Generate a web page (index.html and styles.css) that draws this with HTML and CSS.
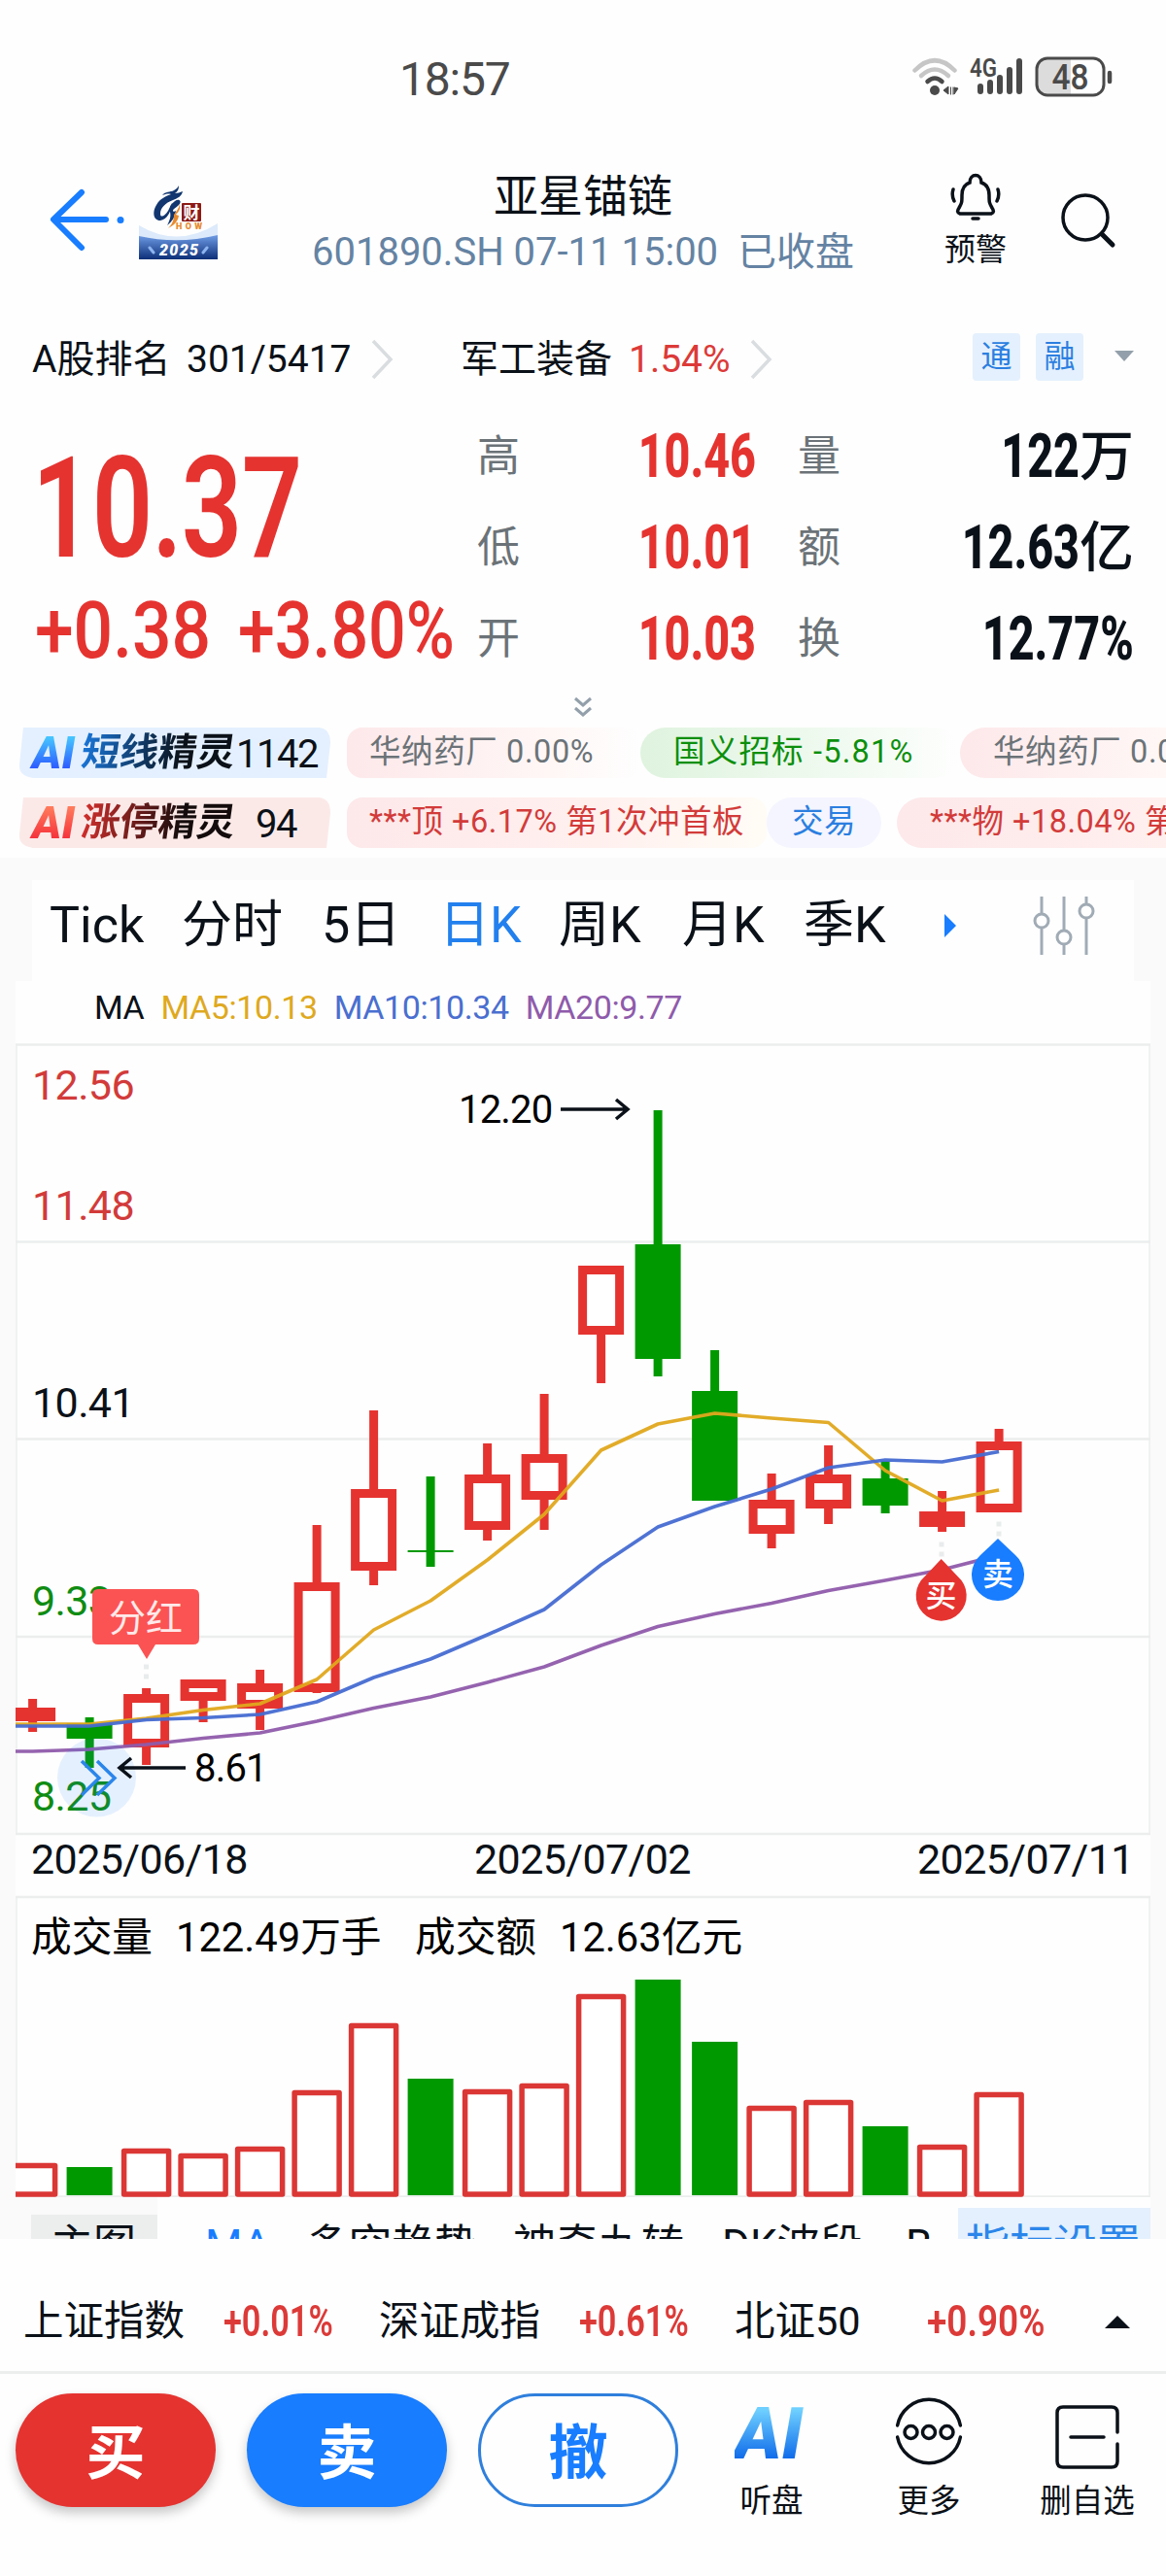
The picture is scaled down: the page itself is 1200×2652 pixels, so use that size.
FILE: index.html
```html
<!DOCTYPE html>
<html lang="zh-CN">
<head>
    <meta charset="utf-8">
    <meta name="viewport" content="width=device-width, initial-scale=1.0">
    <title>亚星锚链 601890.SH</title>
    <link rel="stylesheet" href="styles.css">
</head>
<body>
    <div class="status-bar">
        <div class="clock">18:57</div>
        <svg class="status-icons" width="212" height="44" viewBox="0 0 212 44">
            <g fill="none" stroke-width="4.500" stroke-linecap="round">
                <path d="M3.500 15.500Q24 -5 44.500 15.500" stroke="#c6c6c6"/>
                <path d="M10 21Q24 8 38 21" stroke="#c6c6c6"/>
                <path d="M16.500 27Q24 20 31.500 27" stroke="#4a4a4a"/>
            </g>
            <circle cx="24" cy="36" r="5" fill="#4a4a4a"/>
            <path d="M33 36l5-4v8zM40.500 32.500v8M43 32.500v8M48 34l-4 6v-7z" fill="#4a4a4a" stroke="#4a4a4a" stroke-width="1"/>
            <text x="60" y="22" class="net" textLength="28" lengthAdjust="spacingAndGlyphs">4G</text>
            <g stroke="#4a4a4a" stroke-width="6" stroke-linecap="round">
                <path d="M71 32v5M81 28v9M91 23v14M101 15v22M111 6v31"/>
            </g>
            <path d="M138 4h26v36h-26a9 9 0 0 1-9-9v-18a9 9 0 0 1 9-9z" fill="#dcdcdc"/>
            <rect x="129" y="3" width="69" height="38" rx="11" fill="none" stroke="#4a4a4a" stroke-width="3"/>
            <path d="M204 18v9" stroke="#4a4a4a" stroke-width="4.500" stroke-linecap="round"/>
            <text x="144.500" y="35" class="battery" textLength="38" lengthAdjust="spacingAndGlyphs">48</text>
        </svg>
    </div>

    <div class="header">
        <svg class="back" width="80" height="66" viewBox="0 0 80 66">
            <path d="M34 4L5 32l29 29M6 32h53" fill="none" stroke="#187dff" stroke-width="6" stroke-linecap="round" stroke-linejoin="round"/>
            <circle cx="74" cy="32.500" r="3.500" fill="#187dff"/>
        </svg>
        <svg class="logo" width="81" height="77" viewBox="0 0 81 77">
            <defs>
                <linearGradient id="logo-bg" x1="0" y1="0" x2="0" y2="1">
                    <stop offset="0" stop-color="#6f9ce6"/>
                    <stop offset="1" stop-color="#0c2f78"/>
                </linearGradient>
            </defs>
            <path d="M0 42Q40 66 81 40V77H0z" fill="#dceafb"/>
            <path d="M0 53Q40 62 81 52V77H0z" fill="url(#logo-bg)"/>
            <path d="M41 1c0 4-1 6-4 8 3 0 5-1 8-2-1 5-5 7-10 9-8 3-13 8-13 14 0 5 5 2 8-3l4-8c-1 9-5 17-12 18-8 0-8-10-4-16 4-7 10-9 15-11-3-1-6 0-9 1 3-4 8-3 12-5 2-1 4-3 5-5z" fill="#12366f"/>
            <path d="M37 17c4-3 8 0 4 4-3 3-6 4-6 6 0 1 2 1 3 0-1 7-4 11-9 15 3-6 4-9 3-14-1-5 1-8 5-11z" fill="#12366f"/>
            <path d="M42 20c1 5-1 8-4 11l3 1c-1 6-5 10-11 13 4-4 6-8 6-14 2-3 5-6 6-11z" fill="#e88a2e"/>
            <rect x="44" y="19" width="20" height="19" rx="1" fill="#8c1a16"/>
            <text x="45.500" y="35" class="logo-cai">财</text>
            <text x="38" y="46" class="logo-how" textLength="27">HOW</text>
            <text x="21" y="73" class="logo-year" textLength="40">2025</text>
            <path d="M11 65l4 5M70 65l-4 5" stroke="#8cb4f0" stroke-width="3" stroke-linecap="round"/>
        </svg>
        <div class="title">
            <div class="name">亚星锚链</div>
            <div class="code">601890.SH 07-11 15:00 <span>已收盘</span></div>
        </div>
        <div class="alert">
            <svg width="54" height="54" viewBox="0 0 54 54" fill="none" stroke="#0b1118" stroke-width="3.500" stroke-linecap="round">
                <path d="M11 44c-3-1-3-3-1-6 3-5 3-6 3-13 0-7 2-11 8-13 0-10 12-10 12 0 6 2 8 6 8 13 0 7 0 8 3 13 2 3 2 5-1 6z"/>
                <path d="M4 19q-2 6 1 12M50 19q2 6-1 12M24 49h6"/>
            </svg>
            <div>预警</div>
        </div>
        <svg class="search" width="60" height="60" viewBox="0 0 60 60" fill="none" stroke="#0b1118">
            <circle cx="25" cy="26" r="23" stroke-width="3.500"/>
            <path d="M42 43l11 11" stroke-width="5" stroke-linecap="round"/>
        </svg>
    </div>

    <div class="rank-row">
        <div class="rank-name">A股排名</div>
        <div class="rank-num">301/5417</div>
        <svg class="chev" width="24" height="42" viewBox="0 0 24 42"><path d="M2 2l18 19L2 40" fill="none" stroke="#d9dde0" stroke-width="3.500"/></svg>
        <div class="sector">军工装备</div>
        <div class="sector-chg">1.54%</div>
        <svg class="chev" width="24" height="42" viewBox="0 0 24 42"><path d="M2 2l18 19L2 40" fill="none" stroke="#d9dde0" stroke-width="3.500"/></svg>
        <div class="tag">通</div>
        <div class="tag">融</div>
        <svg class="drop" width="20" height="11" viewBox="0 0 20 11"><path d="M0 0h20L10 11z" fill="#93a0ab"/></svg>
    </div>

    <div class="quote">
        <div class="price-box">
            <div class="price">10.37</div>
            <div class="change"><span class="diff">+0.38</span><span class="pct">+3.80%</span></div>
        </div>
        <div class="stats">
            <div class="label">高</div><div class="val red"><b>10.46</b></div><div class="label">量</div><div class="val"><b>122</b><i>万</i></div>
            <div class="label">低</div><div class="val red"><b>10.01</b></div><div class="label">额</div><div class="val"><b>12.63</b><i>亿</i></div>
            <div class="label">开</div><div class="val red"><b>10.03</b></div><div class="label">换</div><div class="val"><b>12.77%</b></div>
        </div>
    </div>
    <div class="expand">
        <svg width="20" height="24" viewBox="0 0 20 24" fill="none" stroke="#93a0ab" stroke-width="3"><path d="M2 2l8 7 8-7M2 12l8 7 8-7"/></svg>
    </div>

    <div class="ai-row">
        <div class="ai-badge blue">
            <svg class="ai-shape" width="320" height="52" viewBox="0 0 320 52"><path d="M4 0H308Q320 1 320 16L316 52H14Q-1 50 0 38z" fill="#e4f0ff"/></svg>
            <span class="ai">AI</span><span class="ai-name">短线精灵</span><span class="count">1142</span>
        </div>
        <div class="ticker">
            <div class="pill pink w1 first">华纳药厂 0.00%</div>
            <div class="pill green w2">国义招标 -5.81%</div>
            <div class="pill pink w3">华纳药厂 0.00%</div>
        </div>
    </div>
    <div class="ai-row second">
        <div class="ai-badge rose">
            <svg class="ai-shape" width="320" height="52" viewBox="0 0 320 52"><path d="M4 0H308Q320 1 320 16L316 52H14Q-1 50 0 38z" fill="#fbe9e8"/></svg>
            <span class="ai">AI</span><span class="ai-name">涨停精灵</span><span class="count small">94</span>
        </div>
        <div class="ticker">
            <div class="pill hot w4 first">***顶 +6.17% 第1次冲首板</div>
            <div class="pill trade">交易</div>
            <div class="pill hot w5">***物 +18.04% 第1次冲首板</div>
        </div>
    </div>

    <div class="kline">
        <div class="tabs">
            <div>Tick</div><div>分时</div><div>5日</div><div class="active">日K</div><div>周K</div><div>月K</div><div>季K</div>
            <svg class="more-tab" width="12" height="24" viewBox="0 0 12 24"><path d="M0 0l12 12L0 24z" fill="#187dff"/></svg>
            <svg class="sliders" width="64" height="60" viewBox="0 0 64 60" fill="#fff" stroke="#a0abb5" stroke-width="3">
                <path d="M9 0v60M32 0v60M55 0v60"/>
                <circle cx="9" cy="25" r="7"/><circle cx="32" cy="42" r="7"/><circle cx="55" cy="15" r="7"/>
            </svg>
        </div>
        <div class="panel">
            <div class="ma-legend">
                <span>MA</span><span class="ma5">MA5:10.13</span><span class="ma10">MA10:10.34</span><span class="ma20">MA20:9.77</span>
            </div>
            <svg id="chart" width="1168" height="1188" viewBox="16 1074 1168 1188">
                <g stroke="#eceeee" stroke-width="2.500">
                    <path d="M16 1075.500H1184M16 1278.500H1184M16 1481.500H1184M16 1685H1184M16 1888H1184M16 1953H1184M16 2261.500H1184" />
                    <path d="M17 1075V1888M1183 1075V1888M17 1953V2261M1183 1953V2261" stroke-width="1.500"/>
                </g>
                <g class="axis">
                    <text x="33" y="1132" class="up">12.56</text>
                    <text x="33" y="1256" class="up">11.48</text>
                    <text x="33" y="1459">10.41</text>
                    <text x="33" y="1663" class="down">9.33</text>
                    <text x="33" y="1864" class="down">8.25</text>
                    <text x="32" y="1929">2025/06/18</text>
                    <text x="488" y="1929">2025/07/02</text>
                    <text x="944" y="1929">2025/07/11</text>
                </g>
                <g id="candles"></g>
                <g id="volumes"></g>
                <g fill="none" stroke-width="3.600" stroke-opacity=".95" stroke-linejoin="round">
                    <polyline id="ma5" stroke="#e0a81e"/>
                    <polyline id="ma10" stroke="#466bd2"/>
                    <polyline id="ma20" stroke="#8f5bab"/>
                </g>
                <g stroke="#e9ecec" stroke-width="5" stroke-dasharray="5 5">
                    <path d="M150.500 1713.500v16M969 1587.500v16M1028 1566.500v16"/>
                </g>
                <path d="M101 1636h98q6 0 6 6v45q0 6-6 6h-39l-9 15-9-15h-41q-6 0-6-6v-45q0-6 6-6z" fill="#fb5353"/>
                <text x="112" y="1679" class="bonus">分红</text>
                <circle cx="99.500" cy="1830" r="40.500" fill="#187dff" fill-opacity=".11"/>
                <path d="M84 1813l18 17.500-18 17.500M100 1813l18 17.500-18 17.500" fill="none" stroke="#2b86ea" stroke-width="3.500"/>
                <g class="note">
                    <text x="472" y="1156">12.20</text>
                    <text x="200" y="1834">8.61</text>
                </g>
                <path d="M577 1142h69M634 1132l12 10-12 10M191 1820h-68M135 1810l-12 10 12 10" fill="none" stroke="#0b1118" stroke-width="3.500"/>
                <path d="M968.700 1605l17 18a26 26 0 1 1-34 0z" fill="#e53330"/>
                <path d="M1027 1584l18 17a27 27 0 1 1-36 0z" fill="#187dff"/>
                <g class="pin">
                    <text x="968.500" y="1654">买</text>
                    <text x="1027" y="1632">卖</text>
                </g>
                <g class="vol-text">
                    <text x="32" y="2009">成交量</text>
                    <text x="181" y="2009">122.49万手</text>
                    <text x="427" y="2009">成交额</text>
                    <text x="576" y="2009">12.63亿元</text>
                </g>
            </svg>
        </div>
        <div class="indicators">
            <div class="main-chart">主图</div>
            <div class="ind on">MA</div><div class="ind i2">多空趋势</div><div class="ind i3">神奇九转</div><div class="ind i4">DK波段</div><div class="ind i5">B</div>
            <div class="ind-set">指标设置</div>
        </div>
    </div>

    <div class="index-bar">
        <div>上证指数</div><div class="chg">+0.01%</div>
        <div>深证成指</div><div class="chg">+0.61%</div>
        <div>北证50</div><div class="chg wide">+0.90%</div>
        <svg width="26" height="13" viewBox="0 0 26 13"><path d="M0 13h26L13 0z" fill="#0b1118"/></svg>
    </div>

    <div class="footer">
        <button class="btn buy">买</button>
        <button class="btn sell">卖</button>
        <button class="btn cancel">撤</button>
        <div class="tool t1">
            <div class="tool-icon"><span class="ai-big">AI</span></div>
            <div>听盘</div>
        </div>
        <div class="tool t2">
            <div class="tool-icon">
                <svg width="70" height="72" viewBox="0 0 70 72" fill="none" stroke="#0b1118" stroke-width="3.500">
                    <path d="M2.600 29A33 33 0 0 1 67.400 29M2.600 41A33 33 0 0 0 67.400 41" stroke-linecap="round"/>
                    <circle cx="16.500" cy="36" r="6.500"/><circle cx="35" cy="36" r="6.500"/><circle cx="53.500" cy="36" r="6.500"/>
                </svg>
            </div>
            <div>更多</div>
        </div>
        <div class="tool t3">
            <div class="tool-icon">
                <svg width="66" height="66" viewBox="0 0 66 66" fill="none" stroke="#0b1118" stroke-width="3.500" stroke-linecap="round">
                    <path d="M64 28V8q0-6-6-6H8Q2 2 2 8v50q0 6 6 6h50q6 0 6-6V40M16 33h34"/>
                </svg>
            </div>
            <div>删自选</div>
        </div>
    </div>

    <script>
        // type: r = hollow red, f = filled red, g = green; [type, wick top, body top, body bottom, wick bottom, volume top]
        const days = [
            ["f", 1749, 1758, 1772, 1783, 2227],
            ["g", 1768, 1774, 1790, 1820, 2231],
            ["r", 1738, 1744, 1799, 1817, 2212],
            ["r", 1729, 1729, 1751, 1773, 2217],
            ["r", 1719, 1733, 1759, 1781, 2210],
            ["r", 1570, 1629, 1742, 1743, 2152],
            ["r", 1452, 1533, 1617, 1632, 2083],
            ["g", 1520, 1596, 1598, 1613, 2140],
            ["r", 1486, 1518, 1575, 1586, 2151],
            ["r", 1435, 1497, 1544, 1575, 2145],
            ["r", 1303, 1303, 1374, 1424, 2053],
            ["g", 1143, 1281, 1399, 1417, 2038],
            ["g", 1390, 1432, 1545, 1545, 2102],
            ["r", 1517, 1544, 1579, 1594, 2168],
            ["r", 1488, 1518, 1553, 1569, 2162],
            ["g", 1504, 1522, 1550, 1558, 2189],
            ["f", 1535, 1556, 1572, 1577, 2208],
            ["r", 1471, 1484, 1557, 1557, 2154]
        ];
        const ma = {
            ma5: [1775, 1775, 1769, 1760.5, 1754, 1729, 1678, 1648, 1606, 1559, 1493, 1466, 1455, 1460, 1464.5, 1514, 1545, 1534],
            ma10: [1777, 1777, 1770.5, 1768.5, 1765, 1752, 1727, 1708, 1683, 1657, 1611, 1572, 1551, 1533, 1511, 1503, 1505, 1494.5],
            ma20: [1803, 1801, 1796, 1789.5, 1784, 1772, 1758.5, 1747, 1732, 1716, 1694, 1674.5, 1661.5, 1650.5, 1637.5, 1627, 1616, 1601]
        };
        const step = 58.5;
        let candles = "";
        let volumes = "";

        function rect(x, y, w, h, attrs) {
            return `<rect x="${x}" y="${y}" width="${w}" height="${h}" ${attrs}/>`;
        }

        days.forEach(function (d, i) {
            const cx = 33.6 + step * i;
            const color = d[0] == "g" ? "#009900" : "#e53330";
            candles += rect(cx - 4.5, d[1], 9, d[4] - d[1], `fill="${color}"`);
            if (d[0] == "r") {
                candles += rect(cx - 19, d[2] + 4.5, 38, d[3] - d[2] - 9, `fill="#fff" stroke="${color}" stroke-width="9"`);
            } else {
                candles += rect(cx - 23.5, d[2], 47, d[3] - d[2], `fill="${color}"`);
            }
            if (d[0] == "g") {
                volumes += rect(cx - 23.5, d[5], 47, 2260 - d[5], `fill="${color}"`);
            } else {
                volumes += rect(cx - 23, d[5] + 2.5, 46, 2259 - d[5] - 2.5, 'fill="#fff" stroke="#db3735" stroke-width="5.5" stroke-linejoin="round"');
            }
        });
        document.getElementById("candles").innerHTML = candles;
        document.getElementById("volumes").innerHTML = volumes;

        for (const id in ma) {
            const points = ma[id].map((y, i) => (33.6 + step * i) + "," + y);
            document.getElementById(id).setAttribute("points", "16," + ma[id][0] + " " + points.join(" "));
        }
    </script>
</body>
</html>
```
FILE: styles.css
```css
* {
    box-sizing: border-box;
}

body {
    margin: 0;
    width: 1200px;
    height: 2652px;
    overflow: hidden;
    background-color: #fefefe;
    color: #0b1118;
    font-family: Roboto, "Noto Sans CJK SC", sans-serif;
    line-height: 1.2;
    white-space: nowrap;
}

svg {
    display: block;
    flex: none;
}

/* status bar */
.status-bar {
    display: flex;
    height: 125px;
    padding: 57px 0 0 411px;
}

.clock {
    width: 527px;
    line-height: 49px;
    font-size: 48px;
    letter-spacing: -1.2px;
    color: #4a4a4a;
}

.net {
    font-size: 25px;
    font-weight: 600;
    fill: #4a4a4a;
}

.battery {
    font-size: 36px;
    font-weight: 500;
    fill: #4a4a4a;
}

/* header */
.header {
    display: flex;
    height: 195px;
    padding-left: 50px;
}

.back {
    margin-top: 69px;
}

.logo {
    margin: 65px 0 0 13px;
}

.logo-cai {
    font-size: 17px;
    font-weight: 700;
    fill: #fff;
}

.logo-how {
    font-size: 9px;
    font-weight: 900;
    fill: #e88a2e;
}

.logo-year {
    font-size: 16px;
    font-weight: 900;
    font-style: italic;
    fill: #fff;
}

.title {
    width: 752px;
    text-align: center;
}

.name {
    margin-top: 51px;
    line-height: 52px;
    font-size: 46px;
}

.code {
    line-height: 64px;
    font-size: 40px;
    color: #6583a3;
}

.code span {
    margin-left: 10px;
}

.alert {
    width: 64px;
    margin-top: 51px;
    font-size: 32px;
    line-height: 54px;
    margin-left: -4px;
}

.alert svg {
    margin-left: 5px;
}

.search {
    margin: 73px 0 0 56px;
}

/* rank and sector */
.rank-row {
    display: grid;
    grid-template-columns: 159px 190px 92px 173px 125px 229px 65px 81px 30px;
    align-items: center;
    height: 100px;
    padding-left: 33px;
    font-size: 39px;
}

.sector-chg {
    color: #dc3a38;
}

.tag {
    width: 49px;
    height: 49px;
    margin-top: -6px;
    border-radius: 4px;
    background-color: #e4f0fd;
    color: #2b7fe0;
    font-size: 32px;
    line-height: 49px;
    text-align: center;
}

.drop {
    margin-top: -7px;
}

/* quote */
.quote {
    display: flex;
    height: 293px;
    padding-left: 36px;
}

.price-box {
    width: 455px;
    color: #e53330;
}

.price {
    height: 112px;
    margin: 48px 0 0 -3px;
    font-size: 144px;
    font-weight: 600;
    line-height: 112px;
    letter-spacing: -1px;
    transform: scaleX(.76);
    transform-origin: left;
}

.change {
    display: flex;
    margin-top: 24px;
    height: 90px;
    font-size: 82px;
    font-weight: 500;
    line-height: 90px;
}

.change span {
    width: 209px;
    transform: scaleX(.87);
    transform-origin: left;
}

.change .pct {
    transform: scaleX(.83);
}

.stats {
    display: grid;
    grid-template-columns: 120px 167px 65px 324px;
    grid-template-rows: 94px 94px 94px;
    margin-top: 3px;
}

.label {
    align-self: center;
    font-size: 44px;
    color: #6b7378;
}

.val {
    display: flex;
    justify-content: flex-end;
    align-items: center;
}

.stats .label:nth-child(4n+3) {
    padding-left: 43px;
}

.val b {
    font-size: 63px;
    font-weight: 800;
    transform: scaleX(.74);
    transform-origin: right;
}

.val i {
    font-size: 56px;
    font-style: normal;
    font-weight: 500;
    line-height: 60px;
}

.red {
    color: #e53330;
}

.expand {
    height: 36px;
    padding: 4px 0 0 590px;
}

/* AI tickers */
.ai-row {
    display: flex;
    height: 52px;
    padding-left: 20px;
}

.second {
    margin-top: 20px;
}

.ai-badge {
    position: relative;
    display: flex;
    width: 337px;
    align-items: center;
}

.ai-shape {
    position: absolute;
    left: 0;
    top: 0;
}

.ai-badge span {
    position: relative;
}

.ai {
    width: 64px;
    padding-left: 13px;
    font-size: 46px;
    font-weight: 900;
    font-style: italic;
    line-height: 52px;
}

.ai-name {
    width: 159px;
    font-size: 39.5px;
    font-weight: 700;
    line-height: 56px;
    transform: skewX(-8deg);
}

.blue .ai {
    background: linear-gradient(#45c4ff 20%, #2d5cff 80%);
    -webkit-background-clip: text;
    color: transparent;
}

.blue .ai-name {
    background: linear-gradient(90deg, #1976d8, #0b1118 65%);
    -webkit-background-clip: text;
    color: transparent;
}

.rose .ai {
    background: linear-gradient(#ff7a5c 20%, #f5333c 80%);
    -webkit-background-clip: text;
    color: transparent;
}

.rose .ai-name {
    background: linear-gradient(90deg, #d22f2c, #140c0c 65%);
    -webkit-background-clip: text;
    color: transparent;
}

.count {
    padding-top: 4px;
    font-size: 40px;
    letter-spacing: -1.5px;
}

.count.small {
    padding-left: 20px;
}

.ticker {
    display: flex;
    width: 843px;
    overflow: hidden;
}

.pill {
    flex: none;
    height: 52px;
    padding-left: 34px;
    border-radius: 26px;
    font-size: 32.5px;
    line-height: 50px;
    letter-spacing: .6px;
}

.pill.first {
    padding-left: 23px;
    border-radius: 16px;
}

.pink {
    background: linear-gradient(90deg, #fde8ea, #fff7f6 70%, #fefefe);
    color: #6b7378;
}

.green {
    background: linear-gradient(90deg, #dff3df, #f3fbf3 70%, #fefefe);
    color: #0c8f0c;
    letter-spacing: 1.2px;
}

.hot {
    background: linear-gradient(90deg, #fde8ea, #fff0ee 60%, #fffcf6);
    color: #d23b3a;
    letter-spacing: .5px;
}

.trade {
    width: 118px;
    padding-left: 0;
    background-color: #f4f5ff;
    color: #2b7fe0;
    text-align: center;
}

.w1 { width: 302px; }
.w2 { width: 329px; }
.w3 { width: 300px; }
.w4 { width: 432px; }
.w5 { width: 500px; margin-left: 16px; }

/* k-line */
.kline {
    height: 1422px;
    margin-top: 10px;
    padding-top: 23px;
    overflow: hidden;
    background-color: #fafafa;
}

.tabs {
    display: grid;
    grid-template-columns: 136px 144px 121px 123px 127px 125px 145px 91px 70px;
    align-items: center;
    height: 104px;
    margin: 0 33px;
    padding: 0 0 10px 18px;
    background-color: #fefefe;
    font-size: 52px;
}

.active {
    color: #2280ee;
}

.panel {
    height: 1252px;
    margin: 0 16px;
    background-color: #fefefe;
}

.ma-legend {
    display: flex;
    gap: 17px;
    height: 64px;
    padding-left: 81px;
    font-size: 34px;
    line-height: 55px;
    letter-spacing: -.4px;
}

.ma5 { color: #dfa91e; }
.ma10 { color: #4a6fd0; }
.ma20 { color: #8f5bab; }

.axis text {
    font-size: 43px;
    fill: #0b1118;
    letter-spacing: -.6px;
}

.axis .up { fill: #d23b3a; }
.axis .down { fill: #0f8c12; }

.note text {
    font-size: 40px;
    letter-spacing: -.8px;
}

.bonus {
    font-size: 38px;
    fill: #ffe9e9;
}

.pin text {
    font-size: 32px;
    font-weight: 500;
    fill: #fff;
    text-anchor: middle;
}

.vol-text text {
    font-size: 41.7px;
}

.indicators {
    display: flex;
    height: 60px;
    margin: 0 16px;
    background-color: #fefefe;
    font-size: 44px;
    line-height: 72px;
}

.main-chart {
    width: 146px;
    padding-left: 20px;
    border: solid #fafafa;
    border-width: 18px 0 0 16px;
    background-color: #eceeee;
    line-height: 65px;
}

.ind {
    line-height: 101px;
}

.on {
    width: 153px;
    padding-left: 49px;
    color: #187dff;
}

.i2 { width: 213px; }
.i3 { width: 215px; }
.i4 { width: 189px; }
.i5 { width: 54px; }

.ind-set {
    width: 198px;
    margin-top: 11px;
    padding-left: 8px;
    background-color: #e4f0fd;
    color: #2b86ea;
    font-size: 45px;
    line-height: 79px;
}

/* index bar */
.index-bar {
    display: grid;
    grid-template-columns: 206px 160px 206px 160px 198px 183px 26px;
    align-items: center;
    height: 139px;
    padding: 34px 0 0 24px;
    border-bottom: 3px solid #eceeee;
    font-size: 41.5px;
}

.chg {
    color: #dc3a38;
    font-size: 44px;
    font-weight: 600;
    transform: scaleX(.78);
    transform-origin: left;
}

.wide {
    transform: scaleX(.84);
}

/* footer */
.footer {
    display: flex;
    padding: 20px 0 0 16px;
}

.btn {
    width: 206px;
    height: 117px;
    margin-right: 32px;
    padding: 0 0 4px;
    border: none;
    border-radius: 59px;
    color: #fff;
    font-family: inherit;
    font-size: 61px;
    font-weight: 700;
}

.buy {
    background-color: #e53330;
    box-shadow: 0 6px 12px rgba(0, 0, 0, .22);
}

.sell {
    background-color: #187dff;
    box-shadow: 0 6px 12px rgba(0, 0, 0, .22);
}

.cancel {
    background-color: #fefefe;
    border: 3px solid #2f7fdc;
    color: #187dff;
}

.tool {
    width: 130px;
    font-size: 32.5px;
    line-height: 45px;
    text-align: center;
}

.tool-icon {
    display: flex;
    align-items: center;
    justify-content: center;
    height: 89px;
}

.t1 { margin-left: -1px; }
.t2 { margin-left: 32px; }
.t3 { margin-left: 33px; }

.t2 svg {
    margin-top: -9px;
}

.ai-big {
    margin-top: -5px;
    padding-right: 6px;
    font-size: 74px;
    font-weight: 900;
    font-style: italic;
    line-height: 72px;
    background: linear-gradient(#6fd0ff 15%, #0f6bea 85%);
    -webkit-background-clip: text;
    color: transparent;
}
```
